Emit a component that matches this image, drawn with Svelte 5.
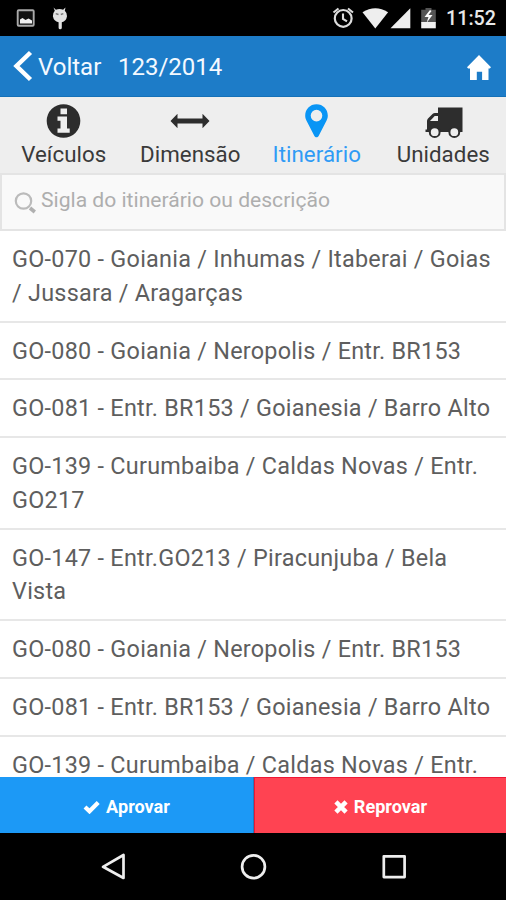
<script>
  const routes = [
    'GO-070 - Goiania / Inhumas / Itaberai / Goias / Jussara / Aragarças',
    'GO-080 - Goiania / Neropolis / Entr. BR153',
    'GO-081 - Entr. BR153 / Goianesia / Barro Alto',
    'GO-139 - Curumbaiba / Caldas Novas / Entr. GO217',
    'GO-147 - Entr.GO213 / Piracunjuba / Bela Vista',
    'GO-080 - Goiania / Neropolis / Entr. BR153',
    'GO-081 - Entr. BR153 / Goianesia / Barro Alto',
    'GO-139 - Curumbaiba / Caldas Novas / Entr.'
  ];
  let query = $state('');
  let active = $state('Itinerário');
</script>

<div class="screen">
  <div class="status">
    <svg class="left" width="70" height="36" viewBox="0 0 70 36">
      <rect x="17.7" y="10.2" width="16" height="15.6" rx="1" fill="#111" stroke="#aaa" stroke-width="1.9" />
      <path d="M20 23.5v-4l2.5-1.5 3 2 3-1.5 3.5 2v3z" fill="#f2f2f2" />
      <path d="M53.500 7.500l2.400 2.300q3.600-1.400 7.200 0L65.500 7.500l-.7 3.200q2.500 2.300 2.200 5.500-.8 5.200-5.200 6v5.500a1.600 1.600 0 0 1-3.200 0v-5.500q-4.800-.8-5.700-6-.3-3.200 1.900-5.500z" fill="#e2e2e2" />
      <path d="M55.700 13.700l2.800.8M63.300 13.700l-2.500.8" stroke="#777" stroke-width="1.400" />
    </svg>
    <div class="indicators">
      <svg width="110" height="36" viewBox="331 0 110 36">
        <circle cx="343.200" cy="18.400" r="8.400" fill="none" stroke="#ddd" stroke-width="2.200" />
        <path d="M333.500 12.500l5-4M353 12.500l-5-4M343 13.500v5.300l4 2.500" fill="none" stroke="#ddd" stroke-width="2.100" />
        <path d="M362.500 12.300q12.800-8 25.600 0L375.300 28.500z" fill="#eee" />
        <path d="M390.500 28.300L410.300 8.200v20.100z" fill="#eee" />
        <path d="M425.500 8h6v1.800h4.300v13h-14.600v-13h4.300z" fill="#555" />
        <path d="M421.200 22h14.600v6.300h-14.600z" fill="#f2f2f2" />
        <path d="M430 10l-5.500 7h4l-2 6 6-8h-4l3-4z" fill="#fff" />
      </svg>
      <span>11:52</span>
    </div>
  </div>

  <header>
    <svg width="37" height="61" viewBox="0 36 37 61"><path d="M30.500 52.500L16.500 66l14 13.500" fill="none" stroke="#fff" stroke-width="4.500" /></svg>
    <span class="back">Voltar</span>
    <span class="number">123/2014</span>
    <svg class="home" width="26" height="26" viewBox="0 0 26 26"><path d="M13 0L25 12.300l-1.200 1.300H22.500V25h-6.400v-8.300h-5.300V25H4V13.600H2.200L1 12.300z" fill="#fff" /></svg>
  </header>

  <nav>
    <button class:active={active === 'Veículos'} onclick={() => (active = 'Veículos')}>
      <svg width="44" height="40" viewBox="0 0 44 40"><circle cx="22.500" cy="20" r="16.800" fill="#2d2d2d" /><path d="M19.500 7.500H26v5.800h-6.500zM16.500 15.500H26v12h2.700v4.200H16.500v-4.200h3v-7.800h-3z" fill="#eee" /></svg>
      <span>Veículos</span>
    </button>
    <button class:active={active === 'Dimensão'} onclick={() => (active = 'Dimensão')}>
      <svg width="44" height="40" viewBox="0 0 44 40"><path d="M2.500 20l7-7.300v4.900h25v-4.900l7 7.300-7 7.300v-4.900h-25v4.900z" fill="#2d2d2d" /></svg>
      <span>Dimensão</span>
    </button>
    <button class:active={active === 'Itinerário'} onclick={() => (active = 'Itinerário')}>
      <svg width="44" height="40" viewBox="-0.5 0 44 40"><path fill-rule="evenodd" d="M22 3.300c-6.500 0-11.300 4.900-11.300 11.200 0 2 .5 3.500 1.200 5l8 15.500c.9 1.700 3.300 1.700 4.200 0l8-15.500c.7-1.500 1.200-3 1.200-5C33.300 8.200 28.500 3.300 22 3.300zm0 5.500a5.800 5.800 0 1 1 0 11.600 5.800 5.800 0 0 1 0-11.600z" fill="#0995f5" /></svg>
      <span>Itinerário</span>
    </button>
    <button class:active={active === 'Unidades'} onclick={() => (active = 'Unidades')}>
      <svg width="44" height="40" viewBox="0 0 44 40"><path fill-rule="evenodd" d="M17 6.500h24.500V31H4.500v-2.500H6V20q0-1.500 1-2.500l4.500-4.500q1-1 2.500-1h3zM9 20h8v-5h-3.300z" fill="#2d2d2d" /><circle cx="13.700" cy="31.200" r="4.900" fill="#eee" stroke="#2d2d2d" stroke-width="2" /><circle cx="33.300" cy="31.200" r="4.900" fill="#eee" stroke="#2d2d2d" stroke-width="2" /></svg>
      <span>Unidades</span>
    </button>
  </nav>

  <label class="search">
    <svg width="26" height="26" viewBox="0 0 26 26"><circle cx="10.500" cy="11" r="7.700" fill="none" stroke="#bbb" stroke-width="2.200" /><path d="M17 18l4.800 4" stroke="#b0b0b0" stroke-width="3.600" /></svg>
    <input bind:value={query} placeholder="Sigla do itinerário ou descrição" />
  </label>

  <ul>
    {#each routes as route}
      <li>{route}</li>
    {/each}
  </ul>

  <div class="actions">
    <button class="approve"><svg width="17" height="14" viewBox="0 0 17 14"><path d="M2 7l4.500 4.300L15.200 2.500" fill="none" stroke="#fff" stroke-width="4.200" /></svg>Aprovar</button>
    <button class="reject"><svg width="14" height="14" viewBox="0 0 13 13"><path d="M1.800 1.800l9.400 9.400M11.200 1.800l-9.400 9.400" stroke="#fff" stroke-width="4.200" /></svg>Reprovar</button>
  </div>

  <div class="system">
    <svg width="506" height="67" viewBox="0 833 506 67" fill="none" stroke="#eee" stroke-width="2.700" stroke-linejoin="round">
      <path d="M123.500 855v23L103 866.800z" />
      <circle cx="253.500" cy="866.700" r="11.400" />
      <rect x="383.800" y="856.300" width="20.800" height="20.800" />
    </svg>
  </div>
</div>

<style>
  .screen {
    width: 506px;
    height: 900px;
    display: flex;
    flex-direction: column;
    overflow: hidden;
    background: #fff;
    font-family: Roboto, sans-serif;
    color: #5e5e5e;
  }
  svg { display: block; flex: none; }
  button { border: 0; padding: 0; font: inherit; color: inherit; }
  .status {
    height: 36px;
    flex: none;
    display: flex;
    justify-content: space-between;
    background: #000;
    color: #e8e8e8;
  }
  .indicators { display: flex; width: 175px; }
  .indicators span { padding-left: 5px; font-size: 19.700px; font-weight: 500; line-height: 38px; white-space: nowrap; }
  header {
    height: 61px;
    box-sizing: border-box;
    flex: none;
    display: flex;
    align-items: center;
    background: #1d7cc8;
    border-bottom: 1px solid #1471b8;
    color: #f4f9ff;
    font-size: 24px;
    line-height: 28px;
  }
  header span { padding-top: 2px; }
  .back { width: 80px; padding-left: 1px; }
  .home { margin: 3px 14px 0 auto; }
  nav {
    height: 76px;
    flex: none;
    display: flex;
    background: #eee;
    color: #3a3a3a;
    font-size: 22.300px;
  }
  nav button {
    flex: 1;
    display: flex;
    flex-direction: column;
    align-items: center;
    background: none;
    padding-top: 4px;
    letter-spacing: 0.05px;
  }
  nav span { line-height: 27px; padding-left: 1px; }
  nav .active { color: #2f9bf5; }
  .search {
    height: 58px;
    flex: none;
    box-sizing: border-box;
    display: flex;
    border: 2px solid #e4e4e4;
    background: #f9f9f9;
    padding: 0 8px 0 11px;
  }
  .search svg { margin-top: 15px; }
  input {
    flex: 1;
    min-width: 0;
    border: 0;
    outline: 0;
    padding: 0 0 6px 2px;
    background: none;
    font: 21.100px Roboto, sans-serif;
    color: #555;
  }
  input::placeholder { color: #aeaeae; opacity: 1; }
  ul {
    flex: 1;
    min-height: 0;
    overflow: hidden;
    margin: 0;
    padding: 0;
    list-style: none;
  }
  li {
    padding: 12px 8px 10px 12px;
    border-bottom: 2px solid #e7e7e7;
    font-size: 23.400px;
    line-height: 33.750px;
    letter-spacing: 0.26px;
  }
  .actions { height: 56px; flex: none; display: flex; color: #fff; font-size: 18.100px; font-weight: 700; }
  .actions button {
    display: flex;
    align-items: center;
    justify-content: center;
    gap: 6px;
    box-sizing: border-box;
    padding-top: 3px;
  }
  .approve { width: 254px; background: #1c99f6; border-right: 1px solid #2878b8; }
  .actions .reject { flex: 1; background: #ff4352; border-top: 1px solid #ee1735; border-left: 1px solid #ee1735; padding-top: 2px; }
  .system { height: 67px; flex: none; background: #000; }
</style>
